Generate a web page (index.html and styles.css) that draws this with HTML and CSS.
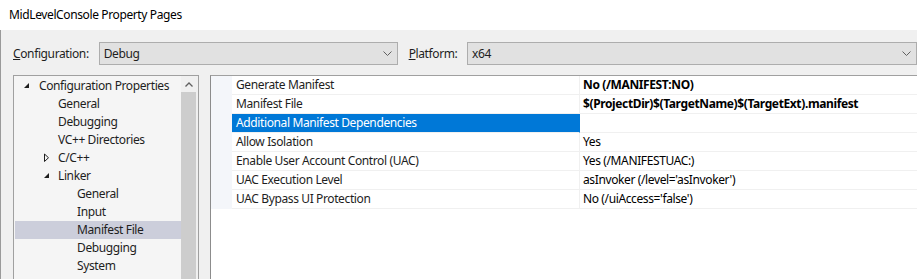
FILE: index.html
```html
<!DOCTYPE html>
<html>
<head>
<meta charset="utf-8">
<link rel="stylesheet" href="styles.css">
</head>
<body>
<div class="window">
  <div class="titlebar">MidLevelConsole Property Pages</div>
  <div class="content">
    <div class="cfg">
      <span class="lbl lbl-conf"><u>C</u>onfiguration:</span>
      <div class="combo combo-conf">
        <span class="combo-text">Debug</span>
        <svg class="chev" width="9" height="5" viewBox="0 0 9 5"><path d="M0.5 0.5 L4.5 4.5 L8.5 0.5" fill="none" stroke="#606060" stroke-width="1"/></svg>
      </div>
      <span class="lbl lbl-plat"><u>P</u>latform:</span>
      <div class="combo combo-plat">
        <span class="combo-text">x64</span>
        <svg class="chev" width="9" height="5" viewBox="0 0 9 5"><path d="M0.5 0.5 L4.5 4.5 L8.5 0.5" fill="none" stroke="#606060" stroke-width="1"/></svg>
      </div>
    </div>
    <div class="panels">
      <div class="tree">
        <div class="tree-items">
          <div class="node l0"><span class="tw"><svg width="8" height="8" viewBox="0 0 8 8"><path d="M6 1 L6 6 L1 6 Z" fill="#1e1e1e"/></svg></span>Configuration Properties</div>
          <div class="node l1"><span class="tw"></span>General</div>
          <div class="node l1"><span class="tw"></span>Debugging</div>
          <div class="node l1"><span class="tw"></span>VC++ Directories</div>
          <div class="node l1"><span class="tw"><svg width="8" height="10" viewBox="0 0 8 10"><path d="M2.5 1 L6.5 4.75 L2.5 8.5 Z" fill="none" stroke="#1e1e1e" stroke-width="1"/></svg></span>C/C++</div>
          <div class="node l1"><span class="tw"><svg width="8" height="8" viewBox="0 0 8 8"><path d="M7 1 L7 6 L2 6 Z" fill="#1e1e1e"/></svg></span>Linker</div>
          <div class="node l2"><span class="tw"></span>General</div>
          <div class="node l2"><span class="tw"></span>Input</div>
          <div class="node l2 sel"><span class="tw"></span>Manifest File</div>
          <div class="node l2"><span class="tw"></span>Debugging</div>
          <div class="node l2"><span class="tw"></span>System</div>
        </div>
        <div class="vscroll">
          <div class="sb-up"><svg width="8" height="5" viewBox="0 0 8 5"><path d="M0.5 4.5 L4 1 L7.5 4.5" fill="none" stroke="#606060" stroke-width="1.3"/></svg></div>
          <div class="sb-thumb"></div>
        </div>
      </div>
      <div class="grid">
        <div class="grid-rows">
          <div class="row"><div class="margin"></div><div class="name">Generate Manifest</div><div class="value bold">No (/MANIFEST:NO)</div></div>
          <div class="row"><div class="margin"></div><div class="name">Manifest File</div><div class="value bold">$(ProjectDir)$(TargetName)$(TargetExt).manifest</div></div>
          <div class="row selected"><div class="margin"></div><div class="name">Additional Manifest Dependencies</div><div class="value"></div></div>
          <div class="row"><div class="margin"></div><div class="name">Allow Isolation</div><div class="value">Yes</div></div>
          <div class="row"><div class="margin"></div><div class="name">Enable User Account Control (UAC)</div><div class="value">Yes (/MANIFESTUAC:)</div></div>
          <div class="row"><div class="margin"></div><div class="name">UAC Execution Level</div><div class="value">asInvoker (/level='asInvoker')</div></div>
          <div class="row"><div class="margin"></div><div class="name">UAC Bypass UI Protection</div><div class="value">No (/uiAccess='false')</div></div>
        </div>
      </div>
    </div>
  </div>
</div>
</body>
</html>
```
FILE: styles.css
```css
html, body {
  margin: 0;
  padding: 0;
  width: 917px;
  height: 279px;
  overflow: hidden;
  background: #f0f0f0;
}
.window {
  font-family: "Noto Sans", "Segoe UI", sans-serif;
  font-size: 12px;
  letter-spacing: -0.38px;
  color: #1e1e1e;
  width: 917px;
  height: 279px;
  overflow: hidden;
}
.titlebar {
  height: 30px;
  line-height: 30px;
  background: #ffffff;
  padding-left: 9px;
  color: #000;
  font-size: 12px;
}
.content {
  height: 249px;
  background: #f0f0f0;
  padding: 12px 0 0 12px;
  box-sizing: border-box;
  border-left: 1px solid #9a9a9a;
}
.cfg {
  display: flex;
  align-items: center;
  height: 23px;
}
.lbl {
  color: #1e1e1e;
  white-space: nowrap;
}
.lbl-conf {
  width: 88px;
}
.lbl-plat {
  width: 60px;
  margin-left: 11px;
}
.combo {
  box-sizing: border-box;
  height: 23px;
  background: #e1e1e1;
  border: 1px solid #adadad;
  display: flex;
  align-items: center;
  justify-content: space-between;
  padding: 0 5px 0 4px;
  flex-shrink: 0;
}
.combo-conf {
  width: 299px;
}
.combo-plat {
  width: 450px;
}
.chev {
  display: block;
}
.panels {
  display: flex;
  margin-top: 10px;
  gap: 11px;
}
.tree {
  width: 186px;
  height: 220px;
  box-sizing: border-box;
  border: 1px solid #a0a0a0;
  background: #f5f5f5;
  display: flex;
  flex-shrink: 0;
}
.tree-items {
  flex: 1;
  padding: 1px 0 0 1px;
}
.node {
  height: 18px;
  line-height: 18px;
  display: flex;
  align-items: center;
  white-space: nowrap;
}
.node.sel {
  background: #cccedb;
}
.tw {
  width: 16px;
  height: 18px;
  display: flex;
  align-items: center;
  flex-shrink: 0;
}
.tw svg {
  display: block;
}
.l0 { padding-left: 8px; }
.l0 .tw svg { margin-top: -1px; }
.l1 { padding-left: 27px; }
.l2 { padding-left: 46px; }
.vscroll {
  width: 17px;
  background: #f0f0f0;
  display: flex;
  flex-direction: column;
}
.sb-up {
  height: 16px;
  display: flex;
  align-items: center;
  justify-content: center;
  padding-right: 2px;
}
.sb-thumb {
  flex: 1;
  width: 15px;
  background: #cdcdcd;
}
.grid {
  flex: 1;
  height: 220px;
  box-sizing: border-box;
  border-top: 1px solid #a0a0a0;
  border-left: 1px solid #8c8c8c;
  background: #ffffff;
}
.row {
  display: flex;
  height: 19px;
}
.margin {
  width: 21px;
  background: #f4f6fa;
  flex-shrink: 0;
}
.name {
  width: 348px;
  flex-shrink: 0;
  box-sizing: border-box;
  padding-left: 4px;
  line-height: 18px;
  border-bottom: 1px solid #f0f0f0;
  border-right: 1px solid #f0f0f0;
  white-space: nowrap;
  overflow: hidden;
}
.value {
  flex: 1;
  box-sizing: border-box;
  padding-left: 3px;
  line-height: 18px;
  border-bottom: 1px solid #f0f0f0;
  white-space: nowrap;
  color: #000;
}
.bold {
  font-weight: bold;
}
.row.selected .name {
  background: #0078d7;
  color: #ffffff;
  border-right-color: #0078d7;
}
```
